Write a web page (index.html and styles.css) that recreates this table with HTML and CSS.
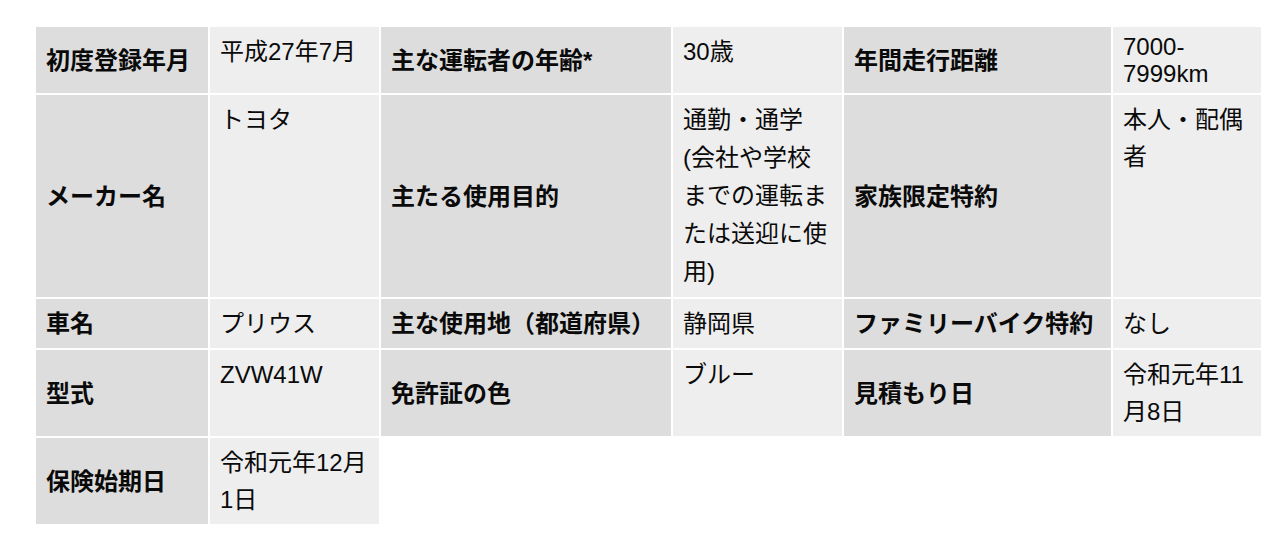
FILE: index.html
```html
<!DOCTYPE html>
<html lang="ja">
<head>
<meta charset="utf-8">
<title>見積り条件</title>
<link rel="stylesheet" href="styles.css">
</head>
<body>
<div class="page">
  <table class="spec">
    <tr>
      <th class="c1">初度登録年月</th>
      <td class="c2">平成27年7月</td>
      <th class="c3">主な運転者の年齢*</th>
      <td class="c4">30歳</td>
      <th class="c5">年間走行距離</th>
      <td class="c6 latin">7000-7999km</td>
    </tr>
    <tr>
      <th>メーカー名</th>
      <td>トヨタ</td>
      <th>主たる使用目的</th>
      <td class="tall">通勤・通学(会社や学校までの運転または送迎に使用)</td>
      <th>家族限定特約</th>
      <td>本人・配偶者</td>
    </tr>
    <tr>
      <th>車名</th>
      <td>プリウス</td>
      <th>主な使用地（都道府県）</th>
      <td>静岡県</td>
      <th>ファミリーバイク特約</th>
      <td>なし</td>
    </tr>
    <tr>
      <th>型式</th>
      <td>ZVW41W</td>
      <th>免許証の色</th>
      <td>ブルー</td>
      <th>見積もり日</th>
      <td>令和元年11月8日</td>
    </tr>
    <tr>
      <th>保険始期日</th>
      <td>令和元年12月1日</td>
    </tr>
  </table>
</div>
</body>
</html>
```
FILE: styles.css
```css
html, body {
  margin: 0;
  padding: 0;
  background: #ffffff;
}

.page {
  padding: 25px 0 0 34px;
  font-family: "Liberation Sans", "Noto Sans CJK JP", sans-serif;
  font-size: 24px;
  color: #0a0a0a;
}

.spec {
  border-collapse: separate;
  border-spacing: 2px;
  table-layout: fixed;
  width: 1229px;
}

.spec th,
.spec td {
  box-sizing: border-box;
  padding: 6px 10px;
  line-height: 37px;
  text-align: left;
}

.spec th {
  background: #dddddd;
  font-weight: bold;
  vertical-align: middle;
}

.spec td {
  background: #eeeeee;
  font-weight: normal;
  vertical-align: top;
}

.spec .latin {
  line-height: 27px;
}

.spec .tall {
  line-height: 38px;
}

.c1 { width: 172px; }
.c2 { width: 169px; }
.c3 { width: 290px; }
.c4 { width: 169px; }
.c5 { width: 267px; }
.c6 { width: 148px; }
```
